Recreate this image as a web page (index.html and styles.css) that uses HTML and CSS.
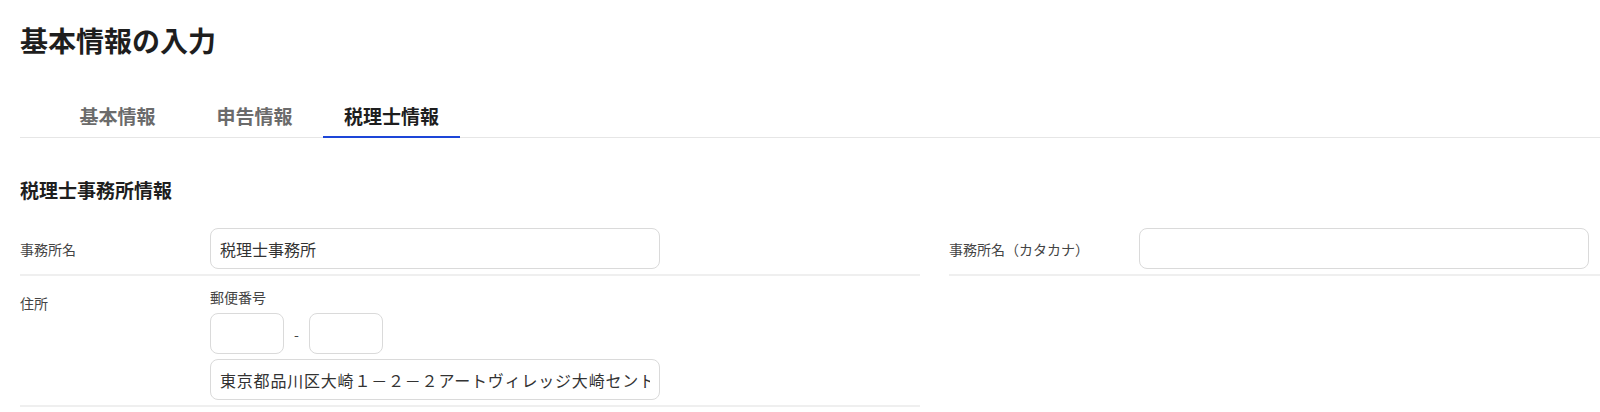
FILE: index.html
```html
<!DOCTYPE html>
<html lang="ja">
<head>
<meta charset="utf-8">
<title>基本情報の入力</title>
<link rel="stylesheet" href="styles.css">
</head>
<body>
<div class="page">
  <h1 class="title">基本情報の入力</h1>
  <nav class="tabs">
    <div class="tab">基本情報</div>
    <div class="tab">申告情報</div>
    <div class="tab active">税理士情報</div>
  </nav>
  <h2 class="section-title">税理士事務所情報</h2>
  <div class="form-grid">
    <div class="field center">
      <div class="label">事務所名</div>
      <div class="control"><input class="input wide" type="text" value="税理士事務所"></div>
    </div>
    <div class="field center">
      <div class="label">事務所名（カタカナ）</div>
      <div class="control"><input class="input wide" type="text" value=""></div>
    </div>
    <div class="field top">
      <div class="label label-top">住所</div>
      <div class="control">
        <div class="sublabel">郵便番号</div>
        <div class="postal">
          <input class="input short" type="text" value="">
          <span class="dash">-</span>
          <input class="input short" type="text" value="">
        </div>
        <input class="input wide address" type="text" value="東京都品川区大崎１－２－２アートヴィレッジ大崎セントラルタワー">
      </div>
    </div>
    <div class="empty"></div>
  </div>
</div>
</body>
</html>
```
FILE: styles.css
```css
html, body {
  margin: 0;
  padding: 0;
  background: #fff;
  overflow: hidden;
}
body {
  font-family: "Noto Sans CJK JP", "Noto Sans", sans-serif;
  color: #222;
}
.page {
  padding: 20px 0 0 20px;
  width: 1580px;
}
.title {
  margin: 0;
  font-size: 28px;
  line-height: 40px;
  font-weight: 700;
  color: #1e1e1e;
}
.tabs {
  margin-top: 40px;
  display: flex;
  padding-left: 29px;
  border-bottom: 1px solid #e6e6e6;
}
.tab {
  width: 137px;
  text-align: center;
  font-size: 19px;
  line-height: 24px;
  font-weight: 700;
  color: #6b6b6b;
  padding: 4px 0 8px;
  border-bottom: 2px solid transparent;
  margin-bottom: -1px;
}
.tab.active {
  color: #1e1e1e;
  border-bottom-color: #1d46d8;
}
.section-title {
  margin: 39px 0 19px;
  font-size: 19px;
  line-height: 26px;
  font-weight: 700;
  color: #1e1e1e;
}
.form-grid {
  display: grid;
  grid-template-columns: 900px 1fr;
  column-gap: 29px;
}
.field {
  display: grid;
  grid-template-columns: 190px 450px;
  padding: 6px 0 5px;
  border-bottom: 2px solid #efefef;
}
.field.center {
  align-items: center;
}
.field.top {
  padding-top: 11px;
  align-items: start;
}
.label {
  font-size: 14px;
  line-height: 20px;
  color: #444;
}
.label-top {
  padding-top: 6px;
}
.control {
  display: flex;
  flex-direction: column;
}
.sublabel {
  font-size: 14px;
  line-height: 20px;
  color: #444;
  margin-bottom: 6px;
}
.postal {
  display: flex;
  align-items: center;
  margin-bottom: 5px;
}
.dash {
  width: 25px;
  text-align: center;
  font-size: 14px;
  color: #444;
}
.input {
  box-sizing: border-box;
  height: 41px;
  border: 1px solid #dadada;
  border-radius: 8px;
  padding: 0 9px;
  font-family: "Noto Sans CJK JP", "Noto Sans", sans-serif;
  font-size: 16px;
  color: #333;
  background: #fff;
  outline: none;
}
.input.address {
  letter-spacing: 0.8px;
}
.input.wide {
  width: 450px;
}
.input.short {
  width: 74px;
}
```
